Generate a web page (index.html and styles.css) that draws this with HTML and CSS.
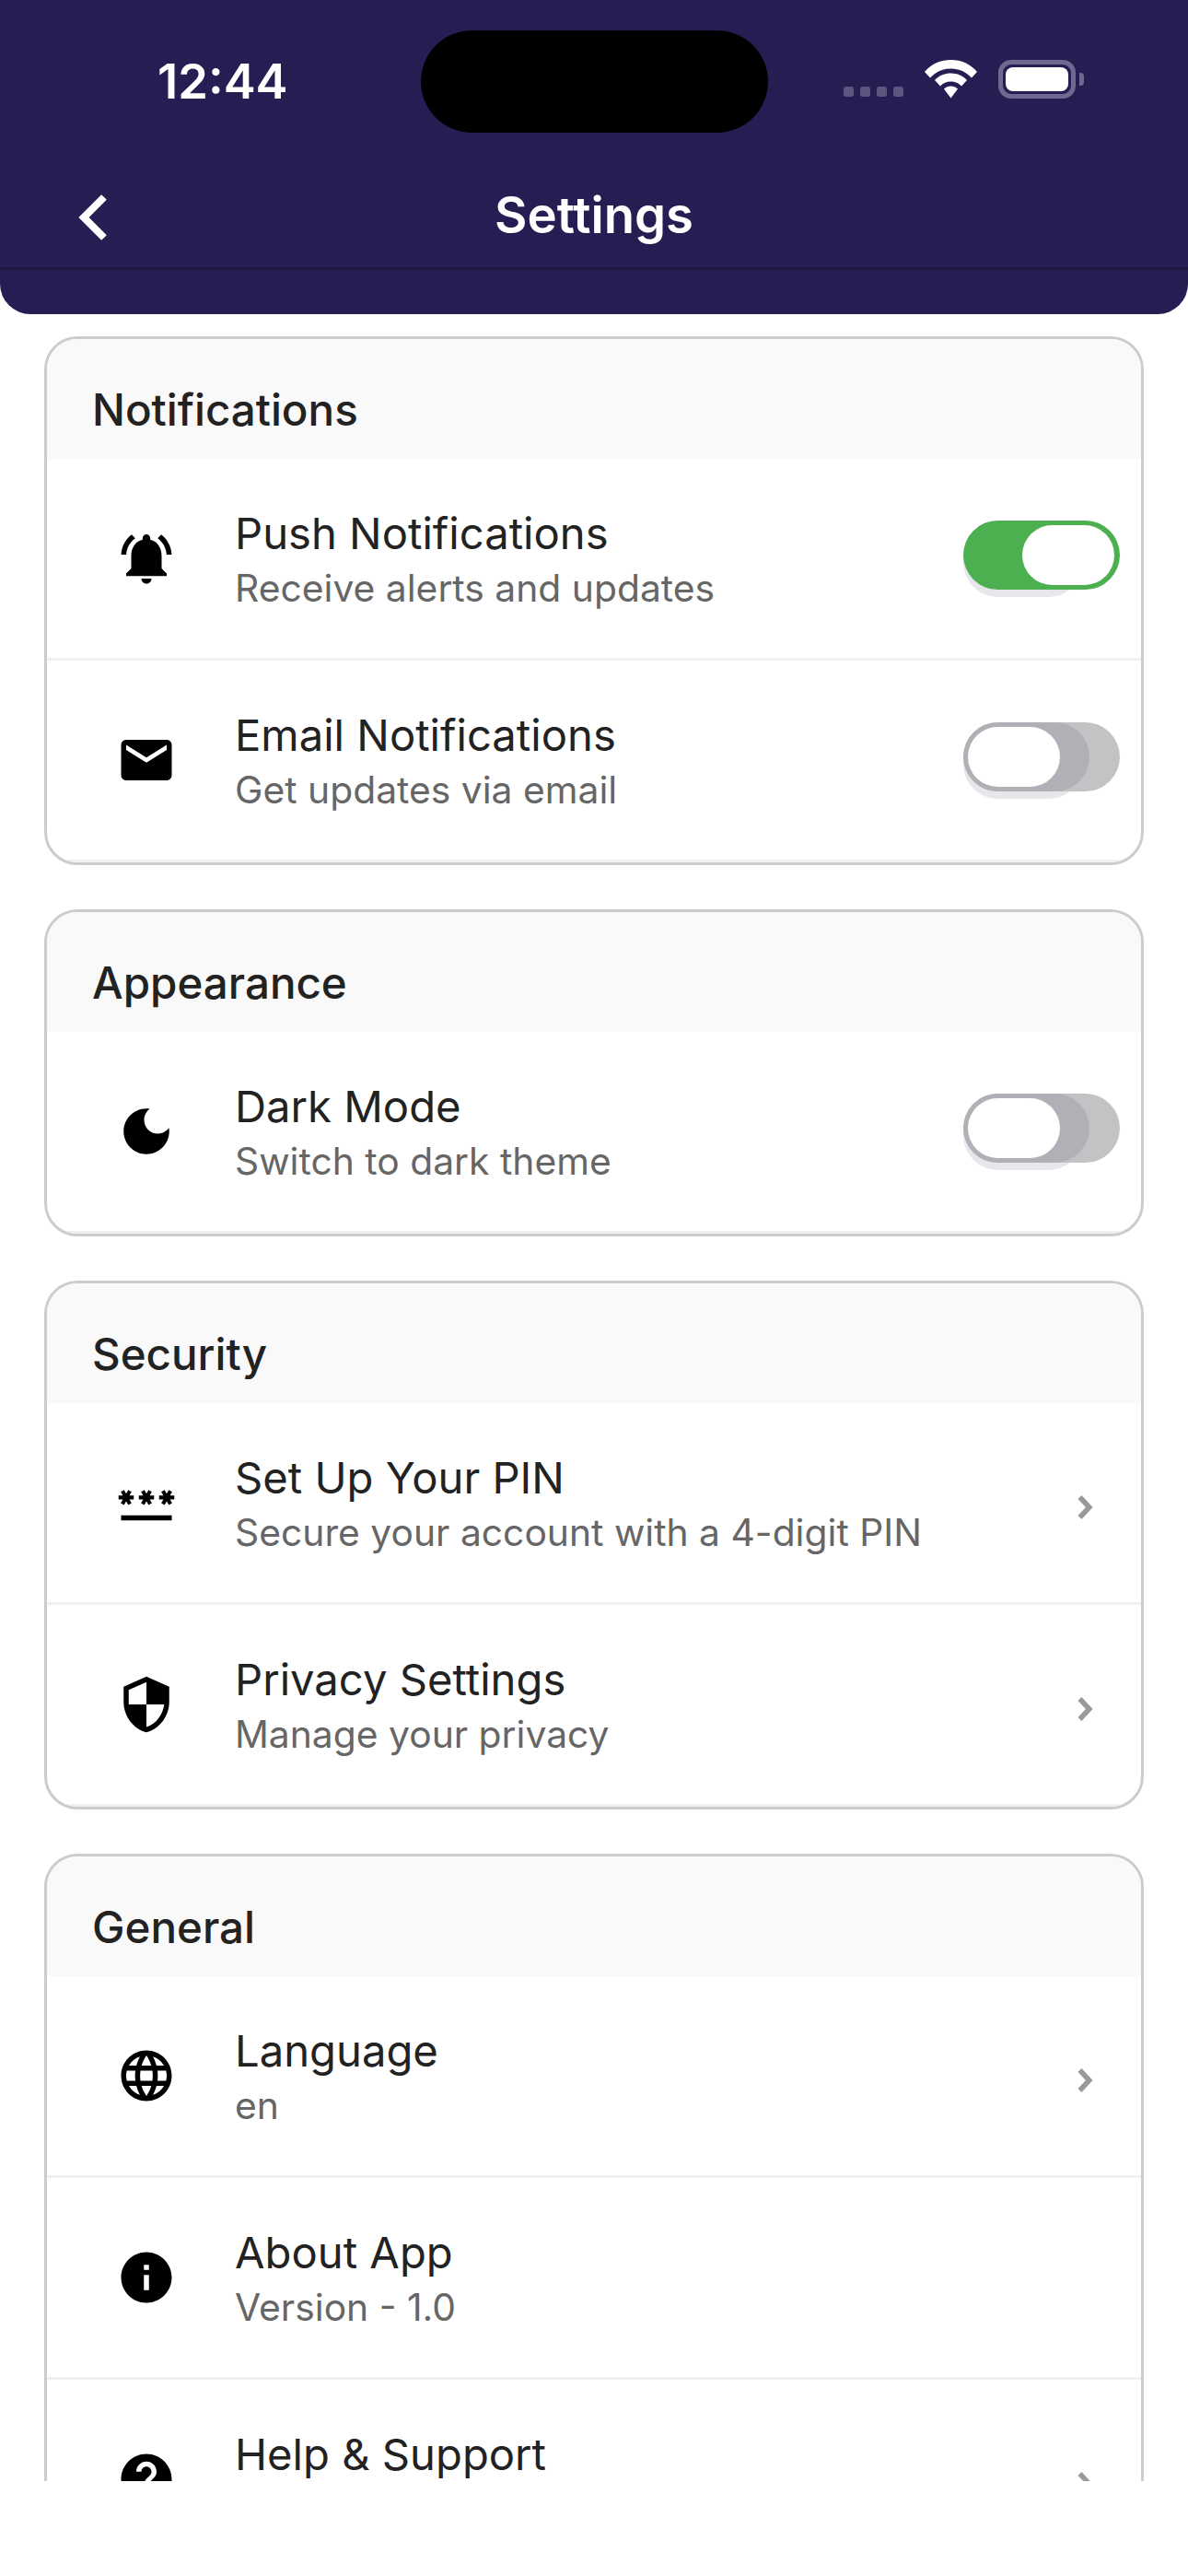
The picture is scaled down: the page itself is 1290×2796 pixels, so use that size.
FILE: index.html
```html
<!DOCTYPE html>
<html lang="en">
<head>
<meta charset="utf-8">
<title>Settings</title>
<link rel="stylesheet" href="styles.css">
</head>
<body>
<div class="screen">
  <header class="header">
    <div class="status">
      <span class="time">12:44</span>
      <span class="island"></span>
      <div class="status-icons">
        <span class="dots"><i></i><i></i><i></i><i></i></span>
        <svg class="wifi" viewBox="0 0 57 42"><path d="M28.5 0C40 0 50 4.500 57 13L51 19.500C45 13 37.500 9.500 28.500 9.500S12 13 6 19.500L0 13C7 4.500 17 0 28.500 0ZM28.500 14.500C35.500 14.500 41.500 17.200 46 22L40 28.500C37 25.300 33 23.500 28.500 23.500S20 25.300 17 28.500L11 22C15.500 17.200 21.500 14.500 28.500 14.500ZM28.500 28.500C31.500 28.500 34 29.500 36 31.500L28.500 41.500L21 31.500C23 29.500 25.500 28.500 28.500 28.500Z" fill="#fff"/></svg>
        <span class="battery"><span class="battery-fill"></span></span>
        <span class="battery-cap"></span>
      </div>
    </div>
    <div class="nav">
      <svg class="back" viewBox="0 0 36 52"><path d="M29 4L7 26L29 48" fill="none" stroke="#fff" stroke-width="8"/></svg>
      <h1 class="title">Settings</h1>
    </div>
    <div class="tail"></div>
  </header>

  <main class="content">
    <section class="card">
      <h2 class="card-title">Notifications</h2>
      <div class="row">
        <svg class="icon" viewBox="0 0 24 24"><path d="M7.58 4.08L6.15 2.65C3.75 4.48 2.17 7.3 2.03 10.5h2c.15-2.65 1.51-4.97 3.55-6.42zm12.39 6.42h2c-.15-3.2-1.73-6.02-4.12-7.85l-1.42 1.43c2.02 1.45 3.39 3.77 3.54 6.42zM18 11c0-3.07-1.64-5.64-4.5-6.32V4c0-.83-.67-1.5-1.5-1.5s-1.5.67-1.5 1.5v.68C7.63 5.36 6 7.92 6 11v5l-2 2v1h16v-1l-2-2v-5zm-6 11c.14 0 .27-.01.4-.04.65-.14 1.18-.58 1.44-1.18.1-.24.15-.5.15-.78h-4c.01 1.1.9 2 2.01 2z"/></svg>
        <div class="text"><div class="label">Push Notifications</div><div class="sub">Receive alerts and updates</div></div>
        <span class="toggle on"><span class="halo"></span><span class="thumb"></span></span>
      </div>
      <div class="row">
        <svg class="icon" viewBox="0 0 24 24"><path d="M20 4H4c-1.100 0-1.990.9-1.990 2L2 18c0 1.100.9 2 2 2h16c1.100 0 2-.9 2-2V6c0-1.100-.9-2-2-2zm0 4l-8 5-8-5V6l8 5 8-5v2z"/></svg>
        <div class="text"><div class="label">Email Notifications</div><div class="sub">Get updates via email</div></div>
        <span class="toggle"><span class="halo"></span><span class="thumb"></span></span>
      </div>
    </section>

    <section class="card">
      <h2 class="card-title">Appearance</h2>
      <div class="row">
        <svg class="icon" viewBox="0 0 24 24"><path d="M12 3c-4.970 0-9 4.030-9 9s4.030 9 9 9 9-4.030 9-9c0-.46-.04-.92-.1-1.360-.98 1.370-2.580 2.260-4.400 2.260-2.980 0-5.400-2.420-5.400-5.400 0-1.810.89-3.420 2.260-4.400-.44-.06-.9-.1-1.360-.1z"/></svg>
        <div class="text"><div class="label">Dark Mode</div><div class="sub">Switch to dark theme</div></div>
        <span class="toggle"><span class="halo"></span><span class="thumb"></span></span>
      </div>
    </section>

    <section class="card">
      <h2 class="card-title">Security</h2>
      <div class="row">
        <svg class="icon" viewBox="0 0 24 24"><path d="M2 17h20v2H2v-2zm1.150-4.050L4 11.470l.85 1.480 1.300-.75-.85-1.480H7v-1.500H5.300l.85-1.470L4.850 7 4 8.470 3.150 7l-1.300.75.85 1.470H1v1.500h1.700l-.85 1.480 1.300.75zm6.700-.75l1.300.75.85-1.480.85 1.480 1.300-.75-.85-1.480H15v-1.500h-1.700l.85-1.470-1.300-.75L12 8.470 11.150 7l-1.300.75.85 1.470H9v1.500h1.700l-.85 1.480zM23 9.220h-1.700l.85-1.470-1.300-.75L20 8.470 19.150 7l-1.300.75.85 1.470H17v1.500h1.700l-.85 1.480 1.300.75.85-1.480.85 1.480 1.300-.75-.85-1.480H23v-1.500z"/></svg>
        <div class="text"><div class="label">Set Up Your PIN</div><div class="sub">Secure your account with a 4-digit PIN</div></div>
        <svg class="chevron" viewBox="0 0 24 36"><path d="M5.500 7L15.800 18L5.500 29" fill="none" stroke="#999" stroke-width="5.500"/></svg>
      </div>
      <div class="row">
        <svg class="icon" viewBox="0 0 24 24"><path d="M12 1L3 5v6c0 5.550 3.840 10.740 9 12 5.160-1.260 9-6.450 9-12V5l-9-4zm0 10.990h7c-.53 4.120-3.280 7.790-7 8.940V12H5V6.300l7-3.110v8.800z"/></svg>
        <div class="text"><div class="label">Privacy Settings</div><div class="sub">Manage your privacy</div></div>
        <svg class="chevron" viewBox="0 0 24 36"><path d="M5.500 7L15.800 18L5.500 29" fill="none" stroke="#999" stroke-width="5.500"/></svg>
      </div>
    </section>

    <section class="card">
      <h2 class="card-title">General</h2>
      <div class="row">
        <svg class="icon" viewBox="0 0 24 24"><path d="M11.990 2C6.470 2 2 6.480 2 12s4.470 10 9.990 10C17.520 22 22 17.520 22 12S17.520 2 11.990 2zm6.930 6h-2.950c-.32-1.250-.78-2.450-1.380-3.560 1.840.63 3.370 1.910 4.330 3.560zM12 4.040c.83 1.200 1.480 2.530 1.910 3.960h-3.820c.43-1.430 1.080-2.760 1.910-3.960zM4.260 14C4.100 13.360 4 12.690 4 12s.1-1.360.26-2h3.380c-.08.66-.14 1.320-.14 2 0 .68.06 1.340.14 2H4.260zm.82 2h2.950c.32 1.250.78 2.450 1.380 3.560-1.840-.63-3.370-1.900-4.330-3.560zm2.950-8H5.080c.96-1.660 2.490-2.930 4.330-3.560C8.810 5.550 8.350 6.750 8.030 8zM12 19.960c-.83-1.200-1.480-2.530-1.910-3.960h3.820c-.43 1.430-1.080 2.760-1.910 3.960zM14.340 14H9.660c-.09-.66-.16-1.320-.16-2 0-.68.07-1.350.16-2h4.680c.09.65.16 1.320.16 2 0 .68-.07 1.340-.16 2zm.25 5.560c.6-1.110 1.060-2.310 1.380-3.560h2.950c-.96 1.650-2.490 2.930-4.330 3.560zM16.360 14c.08-.66.14-1.320.14-2 0-.68-.06-1.340-.14-2h3.380c.16.64.26 1.310.26 2s-.1 1.360-.26 2h-3.380z"/></svg>
        <div class="text"><div class="label">Language</div><div class="sub">en</div></div>
        <svg class="chevron" viewBox="0 0 24 36"><path d="M5.500 7L15.800 18L5.500 29" fill="none" stroke="#999" stroke-width="5.500"/></svg>
      </div>
      <div class="row">
        <svg class="icon" viewBox="0 0 24 24"><path d="M12 2C6.480 2 2 6.480 2 12s4.480 10 10 10 10-4.480 10-10S17.520 2 12 2zm1 15h-2v-6h2v6zm0-8h-2V7h2v2z"/></svg>
        <div class="text"><div class="label">About App</div><div class="sub">Version - 1.0</div></div>
      </div>
      <div class="row">
        <svg class="icon" viewBox="0 0 24 24"><path d="M12 2C6.480 2 2 6.480 2 12s4.480 10 10 10 10-4.480 10-10S17.520 2 12 2zm1 17h-2v-2h2v2zm2.070-7.750l-.9.92C13.450 12.900 13 13.500 13 15h-2v-.5c0-1.100.45-2.100 1.170-2.830l1.240-1.260c.37-.36.59-.86.59-1.410 0-1.100-.9-2-2-2s-2 .9-2 2H8c0-2.210 1.790-4 4-4s4 1.790 4 4c0 .88-.36 1.680-.93 2.250z"/></svg>
        <div class="text"><div class="label">Help &amp; Support</div><div class="sub">&nbsp;</div></div>
        <svg class="chevron" viewBox="0 0 24 36"><path d="M5.500 7L15.800 18L5.500 29" fill="none" stroke="#999" stroke-width="5.500"/></svg>
      </div>
    </section>
  </main>
</div>
</body>
</html>
```
FILE: styles.css
```css
* { box-sizing: border-box; }
html, body { margin: 0; padding: 0; background: #fff; }
.screen { width: 1290px; height: 2796px; overflow: hidden; font-family: Inter, "Noto Sans", sans-serif; }

.header { background: #251e52; border-radius: 0 0 33px 33px; height: 341px; color: #fff; }
.status { height: 160px; position: relative; display: flex; align-items: flex-start; }
.time { font-size: 52.5px; font-weight: 600; line-height: 52px; margin: 62px 0 0 171px; width: 286px; }
.island { width: 377px; height: 111px; margin-top: 33px; background: #000; border-radius: 56px; flex: none; }
.status-icons { display: flex; align-items: flex-end; margin: 65px 0 0 0; height: 42px; flex: none; padding-left: 82px; }
.dots { display: flex; gap: 7px; margin-bottom: 2px; }
.dots i { display: block; width: 11px; height: 11px; border-radius: 3px; background: #5d5681; }
.wifi { width: 57px; height: 42px; margin-left: 23px; }
.battery { width: 84px; height: 42px; margin-left: 23px; border: 5px solid #6e6990; border-radius: 14px; padding: 3px; display: block; }
.battery-fill { display: block; width: 100%; height: 100%; background: #fff; border-radius: 8px; }
.battery-cap { width: 5px; height: 14px; margin: 0 0 14px 4px; background: #6e6990; border-radius: 0 4px 4px 0; }

.nav { height: 133px; border-bottom: 3px solid #1e1845; display: flex; align-items: center; justify-content: center; position: relative; }
.back { position: absolute; left: 84px; top: 50px; width: 36px; height: 52px; }
.title { margin: 0; font-size: 54.5px; font-weight: 600; line-height: 60px; position: relative; top: 8px; }

.content { height: 2352px; overflow: hidden; padding: 24px 48px 0; display: flex; flex-direction: column; gap: 48px; }
.card { border: 3px solid #ccc; border-radius: 36px; overflow: hidden; flex: none; background: #fff; }
.card-title { margin: 0; background: #f9f9f9; height: 130px; padding: 38px 0 0 49px; font-size: 47.5px; line-height: 78px; font-weight: 500; color: #222; }

.row { display: flex; align-items: center; height: 219px; padding: 0 48px 0 75px; border-bottom: 3px solid #f0f0f0; position: relative; z-index: 0; }
.icon { width: 66px; height: 66px; flex: none; fill: #000; }
.text { flex: 1; margin-left: 63px; }
.label { font-size: 47.2px; line-height: 58px; color: #222; font-weight: 400; }
.sub { font-size: 40.8px; line-height: 50px; color: #666; margin-top: 5px; }

.chevron { width: 24px; height: 36px; flex: none; margin-top: 10px; }

.toggle { position: absolute; right: 23px; top: 67px; width: 170px; height: 75px; border-radius: 38px; background: #c3c3c6; }
.toggle::before { content: ""; position: absolute; left: 0; top: 8px; width: 130px; height: 75px; border-radius: 38px; background: #e6e7ea; z-index: -1; }
.toggle .halo { position: absolute; left: 0; top: 0; width: 137px; height: 75px; border-radius: 38px; background: #b0b1b6; }
.toggle .thumb { position: absolute; left: 5px; top: 5px; width: 100px; height: 65px; border-radius: 33px; background: #fff; }
.toggle.on { background: #4caf50; }
.toggle.on .halo { display: none; }
.toggle.on .thumb { left: 64px; }
```
